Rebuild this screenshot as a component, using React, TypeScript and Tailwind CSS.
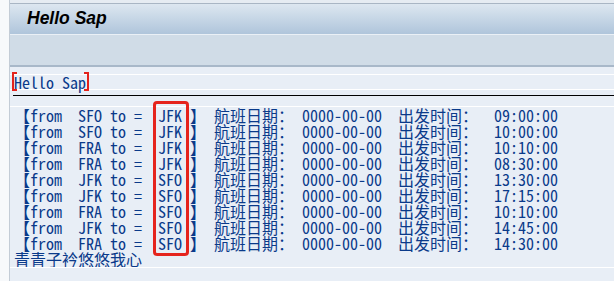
import React from 'react';

const FLIGHTS = [
  { from: 'SFO', to: 'JFK', time: '09:00:00' },
  { from: 'SFO', to: 'JFK', time: '10:00:00' },
  { from: 'FRA', to: 'JFK', time: '10:10:00' },
  { from: 'FRA', to: 'JFK', time: '08:30:00' },
  { from: 'JFK', to: 'SFO', time: '13:30:00' },
  { from: 'JFK', to: 'SFO', time: '17:15:00' },
  { from: 'FRA', to: 'SFO', time: '10:10:00' },
  { from: 'JFK', to: 'SFO', time: '14:45:00' },
  { from: 'FRA', to: 'SFO', time: '14:30:00' },
];

// half-width latin = 8px, full-width CJK = 16px, like the SAP list font
const listFont = {
  fontFamily: '"Noto Sans Mono CJK SC", "Noto Sans CJK SC", "Liberation Mono", monospace',
};

const ListLine: React.FC<{ text: string }> = ({ text }) => (
  <div className="h-[16px] leading-[16px] whitespace-pre">{text}</div>
);

export default function App() {
  return (
    <div className="relative w-[614px] h-[281px] flex overflow-hidden bg-[#e8eef6]">
      <div className="w-[10px] shrink-0 bg-[#f7f9fb] border-r border-[#c3ccd6]" />

      <div className="flex-1 flex flex-col">
        <div className="h-[4px] bg-[#e6ecf2] border-b border-[#a9b6c4]" />
        <div className="h-[30px] bg-gradient-to-b from-[#dde7f0] to-[#afc5db] flex items-center pl-[17px]">
          <span
            className="text-[17.5px] font-bold italic text-black -mt-[2px]"
            style={{ fontFamily: '"Liberation Sans", Arial, sans-serif' }}
          >
            Hello Sap
          </span>
        </div>
        <div className="h-px bg-[#eaf0f6]" />
        <div className="h-[32px] bg-[#d0dce7] border-b-2 border-[#a8b8c9]" />

        <div className="flex-1 flex flex-col text-[16px] text-[#0a3a8a]" style={listFont}>
          <div className="h-[7px]" />
          <div className="h-px bg-white" />
          <div className="h-[14px] pl-[4px] flex items-center">
            <div className="relative">
              <div className="h-[14px] leading-[14px] whitespace-pre">Hello Sap</div>
              <div className="absolute left-[-2px] top-[-3px] w-[5px] h-[19px] border-l-2 border-t-2 border-b-2 border-[#e3231c]" />
              <div className="absolute right-[-3px] top-[-3px] w-[5px] h-[19px] border-r-2 border-t-2 border-b-2 border-[#e3231c]" />
            </div>
          </div>
          <div className="h-px bg-white" />
          <div className="h-[5px]" />
          <div className="h-px bg-black ml-[3px]" />
          <div className="h-[10px]" />
          <div className="h-px bg-white" />

          <div className="pl-[4px] flex flex-col">
            {FLIGHTS.map((f, i) => (
              <ListLine
                key={i}
                text={`【from  ${f.from} to =  ${f.to} 】 航班日期： 0000-00-00  出发时间：  ${f.time}`}
              />
            ))}
            <ListLine text="青青子衿悠悠我心" />
          </div>
          <div className="h-px bg-white" />
        </div>
      </div>

      <div className="absolute left-[153px] top-[101px] w-[36px] h-[155px] border-[3px] border-[#e5241d] rounded-[4px]" />
    </div>
  );
}
